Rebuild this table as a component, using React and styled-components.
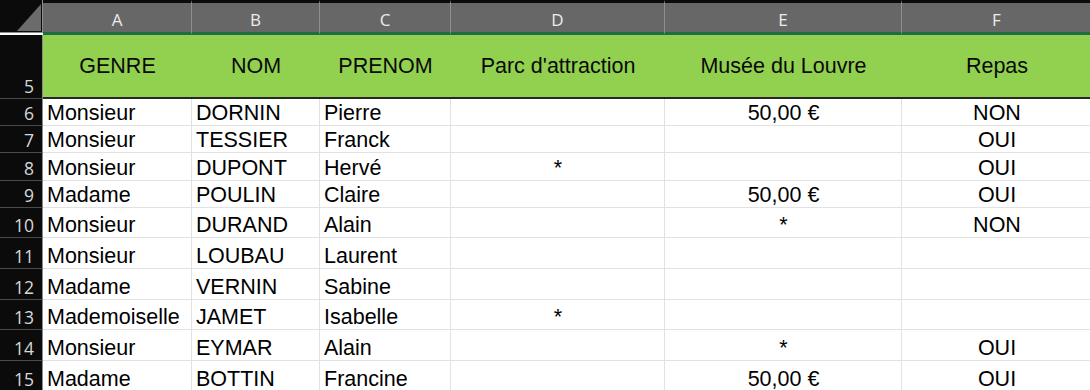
import React from "react";
import styled, { createGlobalStyle } from "styled-components";

const columns = [
  { letter: "A", width: 149, title: "GENRE", align: "left" },
  { letter: "B", width: 128, title: "NOM", align: "left" },
  { letter: "C", width: 131, title: "PRENOM", align: "left" },
  { letter: "D", width: 214, title: "Parc d'attraction", align: "center" },
  { letter: "E", width: 237, title: "Musée du Louvre", align: "center" },
  { letter: "F", width: 190, title: "Repas", align: "center" },
];

const rows = [
  { n: 6, h: 27, cells: ["Monsieur", "DORNIN", "Pierre", "", "50,00 €", "NON"] },
  { n: 7, h: 27, cells: ["Monsieur", "TESSIER", "Franck", "", "", "OUI"] },
  { n: 8, h: 28, cells: ["Monsieur", "DUPONT", "Hervé", "*", "", "OUI"] },
  { n: 9, h: 27, cells: ["Madame", "POULIN", "Claire", "", "50,00 €", "OUI"] },
  { n: 10, h: 30, cells: ["Monsieur", "DURAND", "Alain", "", "*", "NON"] },
  { n: 11, h: 31, cells: ["Monsieur", "LOUBAU", "Laurent", "", "", ""] },
  { n: 12, h: 31, cells: ["Madame", "VERNIN", "Sabine", "", "", ""] },
  { n: 13, h: 30, cells: ["Mademoiselle", "JAMET", "Isabelle", "*", "", ""] },
  { n: 14, h: 31, cells: ["Monsieur", "EYMAR", "Alain", "", "*", "OUI"] },
  { n: 15, h: 31, cells: ["Madame", "BOTTIN", "Francine", "", "50,00 €", "OUI"] },
];

const GlobalStyle = createGlobalStyle`
  html, body {
    margin: 0;
    padding: 0;
    background: #ffffff;
    overflow: hidden;
  }
`;

const Sheet = styled.div`
  display: grid;
  grid-template-columns: 43px ${columns.map((c) => `${c.width}px`).join(" ")};
  grid-template-rows: 35px 64px ${rows.map((r) => `${r.h}px`).join(" ")};
  width: 1090px;
  height: 390px;
  overflow: hidden;
  font-family: "Liberation Sans", Arial, sans-serif;
`;

const Corner = styled.div`
  position: relative;
  background: #0b0b0b;
  border-right: 1px solid #8c8c8c;
  border-bottom: 1px solid #8c8c8c;
  box-sizing: border-box;
  margin-bottom: 2px;

  &::after {
    content: "";
    position: absolute;
    right: 1px;
    bottom: 1px;
    width: 24px;
    height: 27px;
    background: #6b6b6b;
    clip-path: polygon(100% 0, 100% 100%, 0 100%);
  }
`;

const ColLetter = styled.div`
  display: flex;
  align-items: flex-end;
  justify-content: center;
  box-sizing: border-box;
  background: #676767;
  border-top: 3px solid #0b0b0b;
  border-bottom: 3px solid #1f6e43;
  border-right: 1px solid #8f8f8f;
  color: #ececec;
  font-family: "Open Sans", "Noto Sans", sans-serif;
  font-size: 17px;
  line-height: 20px;
  padding-bottom: 2px;
`;

const RowNum = styled.div`
  display: flex;
  align-items: flex-end;
  justify-content: flex-end;
  box-sizing: border-box;
  background: #0b0b0b;
  border-right: 1px solid #8c8c8c;
  border-bottom: 1px solid #4a4a4a;
  color: #d8d8d8;
  font-family: "Open Sans", "Noto Sans", sans-serif;
  font-size: 17.5px;
  line-height: 20px;
  padding: 0 8px 2px 0;
`;

const HeaderCell = styled.div`
  display: flex;
  align-items: center;
  justify-content: center;
  box-sizing: border-box;
  background: #92d050;
  border-bottom: 2px solid #262626;
  color: #0a0a0a;
  font-size: 21.5px;
  white-space: nowrap;
`;

const Cell = styled.div`
  display: flex;
  align-items: flex-end;
  justify-content: ${(p) => (p.$align === "center" ? "center" : "flex-start")};
  box-sizing: border-box;
  background: #ffffff;
  border-right: 1px solid #e2e2e2;
  border-bottom: 1px solid #e2e2e2;
  padding: 0 3px 0 4px;
  color: #000000;
  font-size: 21.5px;
  line-height: 24px;
  white-space: nowrap;
  overflow: hidden;
`;

const App = () => {
  return (
    <>
      <GlobalStyle />
      <Sheet>
        <Corner />
        {columns.map((c) => (
          <ColLetter key={c.letter}>{c.letter}</ColLetter>
        ))}

        <RowNum>5</RowNum>
        {columns.map((c) => (
          <HeaderCell key={c.title}>{c.title}</HeaderCell>
        ))}

        {rows.map((row) => (
          <React.Fragment key={row.n}>
            <RowNum>{row.n}</RowNum>
            {row.cells.map((value, i) => (
              <Cell key={i} $align={columns[i].align}>
                {value}
              </Cell>
            ))}
          </React.Fragment>
        ))}
      </Sheet>
    </>
  );
};

export default App;
